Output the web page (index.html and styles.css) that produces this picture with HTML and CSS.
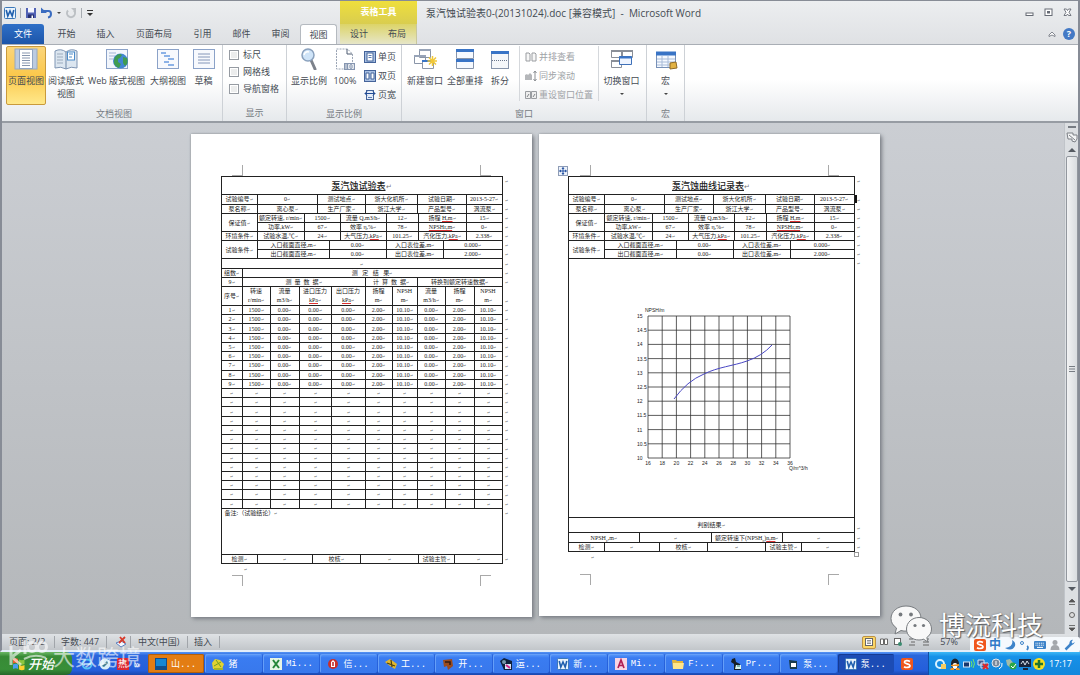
FILE: index.html
```html
<!DOCTYPE html>
<html lang="zh-CN">
<head>
<meta charset="utf-8">
<title>泵汽蚀试验表0-(20131024).doc [兼容模式] - Microsoft Word</title>
<link rel="stylesheet" href="styles.css">
</head>
<body>
<svg class="defs" aria-hidden="true">
  <symbol id="word" viewBox="0 0 12 12"><rect x=".5" y=".5" width="11" height="11" rx="1" fill="#e9f3fc" stroke="#3b78b8"/><path d="M2.2 3l1.6 6L6 4l2.2 5 1.6-6" fill="none" stroke="#1f5fae" stroke-width="1.6"/></symbol>
  <symbol id="sogou" viewBox="0 0 12 12"><rect width="12" height="12" rx="2" fill="#f0561d"/><path d="M9 3.4C7 2.3 3.4 2.4 3.4 4.2S9 5.700 9 7.700 5 10 3 8.800" fill="none" stroke="#fff" stroke-width="1.700"/></symbol>
  <symbol id="pageicon" viewBox="0 0 12 12"><rect x=".5" y=".5" width="11" height="11" fill="#a9c0e2" stroke="#45649a"/><rect x="3" y="2" width="6" height="8" fill="#fff" stroke="#45649a"/><path d="M4.500 4.500h3M4.500 6.500h3" stroke="#5b7db4"/></symbol>
</svg>
<div class="window">
  <header class="head">
    <div class="qat">
      <svg class="i12"><use href="#word"/></svg><span class="bar"></span>
      <button aria-label="保存"><svg class="i12" viewBox="0 0 12 12"><path d="M1 1h10v10H1z" fill="#5263b5"/><path d="M3 1h6v4.500H3z" fill="#f4f6ff"/><path d="M3 7.500h6V11H3z" fill="#252f70"/><path d="M6.500 8.500h1.500V11H6.500z" fill="#fff"/></svg></button>
      <button aria-label="撤消"><svg class="i12" viewBox="0 0 12 12"><path d="M2 4h5.500q2.500 0 2.500 3T7 10.500" fill="none" stroke="#3a6cc0" stroke-width="2"/><path d="M0 4.500V.5l6 5.500H0z" fill="#3a6cc0"/></svg></button>
      <i class="down"></i>
      <button aria-label="恢复"><svg class="i12" viewBox="0 0 12 12"><path d="M3 3.500a4 4 0 1 0 6 0" fill="none" stroke="#bcc0c4" stroke-width="2"/><path d="M6 1h5v5z" fill="#bcc0c4"/></svg></button>
      <span class="bar"></span>
      <button aria-label="自定义"><svg class="i8" viewBox="0 0 8 8"><path d="M1 1.500h6" stroke="#333"/><path d="M1 4h6L4 7z" fill="#333"/></svg></button>
    </div>
    <div class="context-title">表格工具</div>
    <div class="title"><h1>泵汽蚀试验表0-(20131024).doc [兼容模式]&nbsp; -&nbsp; Microsoft Word</h1>
      <div class="winbtns">
        <button aria-label="最小化"><svg viewBox="0 0 9 9"><rect x="1" y="5" width="7" height="2.500" fill="#fff" stroke="#666b75"/></svg></button>
        <button aria-label="还原"><svg viewBox="0 0 9 9"><rect x="1" y="1" width="7" height="6.500" fill="#fff" stroke="#666b75"/><rect x="3.500" y="3.500" width="2" height="1.500" fill="none" stroke="#666b75"/></svg></button>
        <button aria-label="关闭"><svg viewBox="0 0 9 9"><path d="M1 1h2.500l1 1.500 1-1.500H8L6 4.300 8 7.500H5.500l-1-1.500-1 1.500H1L3 4.300z" fill="#fff" stroke="#666b75" stroke-width=".9"/></svg></button>
      </div>
    </div>
    <nav class="tabs">
      <button class="file">文件</button><button>开始</button><button>插入</button><button class="wide">页面布局</button><button>引用</button><button>邮件</button><button>审阅</button><button class="active">视图</button>
    </nav>
    <nav class="context-tabs"><button>设计</button><button>布局</button></nav>
    <div class="help">
      <button aria-label="折叠功能区"><svg class="i8" viewBox="0 0 8 8"><path d="M1 5l3-3 3 3v1.500L4 5 1 6.500z" fill="#fff" stroke="#666b75" stroke-width=".8"/></svg></button>
      <button class="q" aria-label="帮助">?</button>
    </div>
  </header>

  <div class="ribbon">
    <section class="group g-views">
      <div class="tools">
        <button class="big on"><svg viewBox="0 0 24 22"><rect x="1" y="1" width="22" height="20" fill="#bccbe0" stroke="#98a8c0"/><rect x="5.500" y="1.500" width="13" height="19" fill="#fff" stroke="#91a5c2"/><path d="M8 5h8M8 7.500h8M8 10h8M8 12.500h8M8 15h8M8 17.500h8" stroke="#8796ae"/></svg>页面视图</button>
        <button class="big"><svg viewBox="0 0 24 22"><path d="M1 3q6-3 11 1 5-4 11-1v17q-6-2-11 1-5-3-11-1z" fill="#dce6f0" stroke="#7f95b3"/><path d="M12 4v17" stroke="#6f86a5"/><path d="M3 6h6M3 9h6M3 12h6M3 15h6" stroke="#9cabbd"/><rect x="13.500" y="4" width="7" height="8" fill="#fff" stroke="#4d8bc8"/><path d="M15 6h4M15 9h3" stroke="#4d8bc8"/></svg>阅读版式<br>视图</button>
        <button class="big w-web"><svg viewBox="0 0 24 22"><rect x="1.500" y="1.500" width="21" height="19" fill="#f2f6fc" stroke="#8ba2c8"/><path d="M4 5h7M4 8h6M4 11h4" stroke="#a3b5d4"/><circle cx="15.500" cy="13" r="7.500" fill="#4186d2"/><path d="M10 9q4-5 7-2l-2 3-2 1v3l3 2-2 4q-6-2-5-8zM18 9l4 1q2 5-2 8l-2-3z" fill="#409c50"/></svg><span>Web 版式视图</span></button>
        <button class="big w-out"><svg viewBox="0 0 24 22"><rect x="1.500" y="1.500" width="21" height="19" fill="#f7f9fd" stroke="#8ba2c8"/><path d="M5 5h5M8 8h6M12 11h6M8 14h5M12 17h6" stroke="#6a9be0" stroke-width="1.500"/></svg>大纲视图</button>
        <button class="big w-draft"><svg viewBox="0 0 24 22"><rect x="1.500" y="1.500" width="21" height="19" fill="#f7f9fd" stroke="#8ba2c8"/><path d="M6 6h12M6 9h12M6 12h12M6 15h12" stroke="#8496b8"/></svg>草稿</button>
      </div>
      <h2>文档视图</h2>
    </section>
    <section class="group g-show">
      <div class="tools stack">
        <label><input type="checkbox">标尺</label><label><input type="checkbox">网格线</label><label><input type="checkbox">导航窗格</label>
      </div>
      <h2>显示</h2>
    </section>
    <section class="group g-zoom">
      <div class="tools">
        <button class="big"><svg viewBox="0 0 24 22"><path d="M14 12l4 9" stroke="#7d828b" stroke-width="3" stroke-linecap="round"/><circle cx="11" cy="7" r="6" fill="#cfe4f8" stroke="#8aa1bd" stroke-width="1.500"/><path d="M7 7q1-4 5-3" fill="none" stroke="#fff" stroke-width="1.500"/></svg>显示比例</button>
        <button class="big w-100"><svg viewBox="0 0 24 22"><path d="M3.500 1h11l5 5v15h-16z" fill="#fff" stroke="#9aa4b4" stroke-dasharray="2 1"/><path d="M14 1v5h5" fill="none" stroke="#4d5a70"/><path d="M11 15h11v7H11z" fill="#8696b0"/><path d="M13 16v5M15.500 16.500h1.500v4h-1.500zM19 16.500h1.500v4H19z" fill="none" stroke="#fff" stroke-width=".8"/></svg>100%</button>
        <div class="stack list">
          <button><svg class="i12"><use href="#pageicon"/></svg>单页</button>
          <button><svg class="i12" viewBox="0 0 12 12"><rect x=".5" y=".5" width="11" height="11" fill="#a9c0e2" stroke="#45649a"/><path d="M2 3h3v6H2zM7 3h3v6H7z" fill="#fff" stroke="#45649a"/></svg>双页</button>
          <button><svg class="i12" viewBox="0 0 12 12"><rect x="2.500" y="1.500" width="7" height="9" fill="#e4ecf8" stroke="#45649a"/><path d="M1 4.500h10M3 2.500l-2 2 2 2M9 2.500l2 2-2 2" fill="none" stroke="#214b94"/><path d="M4 8.500h4" stroke="#5b7db4"/></svg>页宽</button>
        </div>
      </div>
      <h2>显示比例</h2>
    </section>
    <section class="group g-window">
      <div class="tools">
        <button class="big"><svg viewBox="0 0 24 22"><g fill="#fff" stroke="#8a95a8"><path d="M6.500 1.500h11v8h-11zM1.500 7.500h11v8h-11z"/><path d="M9.500 12.500h11v8h-11z" stroke="#8a95a8"/></g><path d="M6 2h12M1 8h12" stroke="#98a4b8" stroke-width="2"/><path d="M9 13h12" stroke="#3974c6" stroke-width="2"/><path d="M19.500 8v10M14.500 13h10M16 9.500l7 7M23 9.500l-7 7" stroke="#f1c838" stroke-width="1.500"/></svg>新建窗口</button>
        <button class="big"><svg viewBox="0 0 24 22"><path d="M3.500 1.500h17v9h-17zM3.500 11.500h17v9h-17z" fill="#f5f9ff" stroke="#8794aa"/><path d="M3 2.500h18M3 12.500h18" stroke="#3974c6" stroke-width="3"/></svg>全部重排</button>
        <button class="big w-split"><svg viewBox="0 0 24 22"><rect x="3.500" y="3.500" width="17" height="17" fill="#f5f7fa" stroke="#8794aa"/><path d="M3 4.500h18" stroke="#3974c6" stroke-width="3"/><path d="M4 12.500h16" stroke="#69758a" stroke-dasharray="1 1"/></svg>拆分</button>
        <div class="stack list ruled">
          <button disabled><svg class="i12" viewBox="0 0 12 12"><path d="M1 2h3l1 1v7H1zM7 2h3l1 1v7H7z" fill="#f7f7f7" stroke="#9a9da1"/></svg>并排查看</button>
          <button disabled><svg class="i12" viewBox="0 0 12 12"><path d="M0 5l2-1 1 1 2-2 2 2v5H0z" fill="#b5b7ba"/><path d="M10 1v10M8.500 3L10 1l1.500 2M8.500 9l1.500 2 1.500-2" fill="none" stroke="#8d9094"/></svg>同步滚动</button>
          <button disabled><svg class="i12" viewBox="0 0 12 12"><path d="M.5 2.500h5v7h-5zM6.500 2.500h5v7h-5z" fill="#eee" stroke="#9a9da1"/><path d="M2 8l2-3M8 8l2-3" stroke="#808488"/></svg>重设窗口位置</button>
        </div>
        <button class="big w-switch"><svg viewBox="0 0 24 22"><g fill="#fff" stroke="#8a8f98"><path d="M1.500 2.500h10v7h-10zM12.500 2.500h10v7h-10zM1.500 12.500h10v7h-10z"/></g><path d="M1 3h22M1 13h11" stroke="#8a8f98" stroke-width="2"/><path d="M9.500 8.500h12v8h-12z" fill="#eef4ff" stroke="#3f71b9"/><path d="M9 9.500h13" stroke="#3974c6" stroke-width="2"/></svg>切换窗口<i class="down"></i></button>
      </div>
      <h2>窗口</h2>
    </section>
    <section class="group g-macro">
      <div class="tools"><button class="big"><svg viewBox="0 0 24 22"><rect x="2.500" y="4.500" width="19" height="15" fill="#f5f9ff" stroke="#7891b8"/><path d="M2 5.500h20" stroke="#3974c6" stroke-width="4"/><path d="M3 11h18M3 14h18M3 17h18M8 8v11M14 8v11" stroke="#a8bbd8"/><path d="M16 15l6-1 1 6-7 1z" fill="#e2b243" stroke="#906b26"/></svg>宏<i class="down"></i></button></div>
      <h2>宏</h2>
    </section>
  </div>

  <main class="work">
    <div class="canvas">
      <article class="page">
        <i class="crop tl"></i><i class="crop tr"></i><i class="crop bl"></i><i class="crop br"></i>
        <table class="r-title"><tr><th>泵汽蚀试验表</th></tr></table>
        <table class="r-a"><colgroup><col class="c36"><col class="c60"><col class="c48"><col class="c52"><col class="c49"><col></colgroup>
          <tr><td>试验编号</td><td>0</td><td>测试地点</td><td>浙大化机所</td><td>试验日期</td><td>2013-5-27</td></tr>
          <tr><td>泵名称</td><td>离心泵</td><td>生产厂家</td><td>浙江大学</td><td>产品型号</td><td>涡流泵</td></tr></table>
        <table class="r-b"><colgroup><col class="c36"><col class="c47"><col class="c36"><col class="c46"><col class="c32"><col class="c48"><col></colgroup>
          <tr><td rowspan="2">保证值</td><td>额定转速, r/min</td><td>1500</td><td>流量 Q,m3/h</td><td>12</td><td>扬程 <u>H,m</u></td><td>15</td></tr>
          <tr><td>功率,kW</td><td>67</td><td>效率 η,%</td><td>78</td><td><u>NPSHr,m</u></td><td>0</td></tr>
          <tr><td>环境条件</td><td>试验水温,℃</td><td>24</td><td>大气压力,<u>kPa</u></td><td>101.25</td><td>汽化压力,<u>kPa</u></td><td>2.338</td></tr></table>
        <table class="r-c"><colgroup><col class="c36"><col class="c72"><col class="c57"><col class="c57"><col></colgroup>
          <tr><td rowspan="2">试验条件</td><td>入口截面直径,m</td><td>0.00</td><td>入口表位差,m</td><td>0.000</td></tr>
          <tr><td>出口截面直径,m</td><td>0.00</td><td>出口表位差,m</td><td>2.000</td></tr></table>
        <table class="r-gap"><tr><td></td></tr></table>
        <table class="r-head"><colgroup><col class="c21"><col class="c28"><col class="c29"><col class="c32"><col class="c34"><col class="c27"><col class="c25"><col class="c28"><col class="c29"><col></colgroup>
          <tr><td>组数</td><td colspan="9">测 &nbsp; 定 &nbsp; 结 &nbsp; 果</td></tr>
          <tr><td>9</td><td colspan="4">测&nbsp; 量&nbsp; 数&nbsp; 据</td><td colspan="2">计&nbsp; 算&nbsp; 数&nbsp; 据</td><td colspan="3">转换到额定转速数据</td></tr>
          <tr class="units"><td>序号</td><td>转速<br>r/min</td><td>流量<br>m3/h</td><td>进口压力<br><u>kPa</u></td><td>出口压力<br><u>kPa</u></td><td>扬程<br>m</td><td>NPSH<br>m</td><td>流量<br>m3/h</td><td>扬程<br>m</td><td>NPSH<br>m</td></tr></table>
        <table class="r-data"><colgroup><col class="c21"><col class="c28"><col class="c29"><col class="c32"><col class="c34"><col class="c27"><col class="c25"><col class="c28"><col class="c29"><col></colgroup><tbody id="readings"></tbody></table>
        <table class="r-note"><tr><td>备注:（试验结论）</td></tr></table>
        <table class="r-sign"><colgroup><col class="c36"><col class="c55"><col class="c48"><col class="c58"><col class="c36"><col></colgroup><tr><td>检测</td><td></td><td>校核</td><td></td><td>试验主管</td><td></td></tr></table>
        <p class="after">↵</p>
      </article>

      <article class="page second">
        <i class="crop tl"></i><i class="crop tr"></i><i class="crop bl"></i><i class="crop br"></i>
        <svg class="move" viewBox="0 0 10 10"><rect x=".5" y=".5" width="9" height="9" fill="#eef3fb" stroke="#8e9cb6"/><path d="M5 1.500v7M1.500 5h7" stroke="#2a56a4"/><path d="M3.500 3L5 1l1.500 2zM3.500 7L5 9l1.500-2zM3 3.500L1 5l2 1.500zM7 3.500L9 5 7 6.500z" fill="#2a56a4"/></svg>
        <table class="r-title"><tr><th>泵汽蚀曲线记录表</th></tr></table>
        <table class="r-a"><colgroup><col class="c36"><col class="c60"><col class="c49"><col class="c52"><col class="c49"><col></colgroup>
          <tr><td>试验编号</td><td>0</td><td>测试地点</td><td>浙大化机所</td><td>试验日期</td><td>2013-5-27</td></tr>
          <tr><td>泵名称</td><td>离心泵</td><td>生产厂家</td><td>浙江大学</td><td>产品型号</td><td>涡流泵</td></tr></table>
        <table class="r-b"><colgroup><col class="c36"><col class="c48"><col class="c36"><col class="c46"><col class="c32"><col class="c48"><col></colgroup>
          <tr><td rowspan="2">保证值</td><td>额定转速, r/min</td><td>1500</td><td>流量 Q,m3/h</td><td>12</td><td>扬程 <u>H,m</u></td><td>15</td></tr>
          <tr><td>功率,kW</td><td>67</td><td>效率 η,%</td><td>78</td><td><u>NPSHr,m</u></td><td>0</td></tr>
          <tr><td>环境条件</td><td>试验水温,℃</td><td>24</td><td>大气压力,<u>kPa</u></td><td>101.25</td><td>汽化压力,<u>kPa</u></td><td>2.338</td></tr></table>
        <table class="r-c"><colgroup><col class="c36"><col class="c72"><col class="c57"><col class="c57"><col></colgroup>
          <tr><td rowspan="2">试验条件</td><td>入口截面直径,m</td><td>0.00</td><td>入口表位差,m</td><td>0.000</td></tr>
          <tr><td>出口截面直径,m</td><td>0.00</td><td>出口表位差,m</td><td>2.000</td></tr></table>
        <table class="r-chart"><tr><td><svg id="chart" viewBox="0 0 200 180" role="img" aria-label="NPSH 曲线"></svg></td></tr></table>
        <table class="r-verdict"><tr><td>判别结果</td></tr></table>
        <table class="r-npsh"><tr><td>NPSH<sub>c</sub>,m</td><td></td><td>额定转速下(NPSH<sub>c</sub>)<u>n,m</u></td><td></td></tr></table>
        <table class="r-sign"><colgroup><col class="c36"><col class="c55"><col class="c48"><col class="c58"><col class="c36"><col></colgroup><tr><td>检测</td><td></td><td>校核</td><td></td><td>试验主管</td><td></td></tr></table>
        <i class="handle"></i><i class="caret"></i>
        <p class="after">↵</p>
      </article>
    </div>
    <div class="scroll">
      <i class="split"></i>
      <button aria-label="标尺"><svg class="i12" viewBox="0 0 12 12"><path d="M1 2h6v2h4v4l-2 3-3-1V8H2z" fill="#f3f4f5" stroke="#7c8086"/><path d="M3 4l6 5" stroke="#7c8086"/></svg></button>
      <button class="arrow" aria-label="向上"><i class="tri up"></i></button>
      <div class="track"><div class="thumb"><svg class="i8" viewBox="0 0 8 8"><path d="M1 1.500h6M1 4h6M1 6.500h6" stroke="#777c83"/></svg></div></div>
      <button class="arrow" aria-label="向下"><i class="tri"></i></button>
      <button class="arrow" aria-label="上一页"><svg class="i8" viewBox="0 0 8 8"><path d="M1 4l3-3 3 3zM1 6.500h6" fill="#555" stroke="#555" stroke-width=".8"/></svg></button>
      <button class="arrow" aria-label="选择浏览对象"><svg class="i8" viewBox="0 0 8 8"><circle cx="4" cy="4" r="2.500" fill="#ddd" stroke="#666"/></svg></button>
      <button class="arrow" aria-label="下一页"><svg class="i8" viewBox="0 0 8 8"><path d="M1 4l3 3 3-3zM1 1.500h6" fill="#555" stroke="#555" stroke-width=".8"/></svg></button>
    </div>
  </main>

  <footer class="status">
    <span class="s-page">页面: 2/2</span><span class="s-words">字数: 447</span>
    <span class="s-proof"><svg class="i12" viewBox="0 0 12 12"><path d="M1 7l5-2 5 3-5 3z" fill="#f5f8ff" stroke="#5e82c0"/><path d="M5 1l5 6M10 1L4 7" stroke="#d83b2b" stroke-width="1.800"/></svg></span>
    <span class="s-lang">中文(中国)</span><span class="s-ins">插入</span>
    <div class="views">
      <button class="on" aria-label="页面视图"><svg class="i8" viewBox="0 0 8 8"><rect x=".5" y=".5" width="7" height="7" fill="#fff" stroke="#666"/><path d="M2 2.500h4M2 4h4M2 5.500h4" stroke="#666" stroke-width=".7"/></svg></button>
      <button aria-label="阅读版式"><svg class="i8" viewBox="0 0 8 8"><path d="M.5 1h3v5.500h-3zM4.500 1h3v5.500h-3z" fill="#fff" stroke="#666"/></svg></button>
      <button aria-label="Web 版式"><svg class="i8" viewBox="0 0 8 8"><rect x=".5" y=".5" width="6" height="6" fill="#fff" stroke="#666"/><circle cx="6" cy="6" r="2" fill="#3a8b70"/></svg></button>
      <button aria-label="大纲"><svg class="i8" viewBox="0 0 8 8"><path d="M1 1h4M3 4h4M1 7h6" stroke="#666"/></svg></button>
      <button aria-label="草稿"><svg class="i8" viewBox="0 0 8 8"><path d="M1 1h6M1 4h6M1 7h6" stroke="#666"/></svg></button>
      <span>57%</span>
    </div>
  </footer>
</div>

<div class="taskbar">
  <button class="start"><svg viewBox="0 0 14 14"><path d="M1 2q3-1.500 5 0v4.500q-2-1.500-5 0z" fill="#f05b2b"/><path d="M7 2.500q3 1.500 5.500 0V7Q10 8.500 7 7z" fill="#8cc63f"/><path d="M1 7.500q3-1.500 5 0V12q-2-1.500-5 0z" fill="#4a9df0"/><path d="M7 8q3 1.500 5.500 0v4.500q-2.500 1.500-5.500 0z" fill="#ffd02e"/></svg>开始</button>
  <div class="quick">
    <button aria-label="浏览器"><svg class="i12" viewBox="0 0 12 12"><circle cx="6" cy="6" r="4.500" fill="none" stroke="#56c0f5" stroke-width="2"/><path d="M3 6h7" stroke="#bfeaff" stroke-width="1.500"/></svg></button>
    <button aria-label="桌面"><svg class="i12" viewBox="0 0 12 12"><circle cx="6" cy="6" r="5.500" fill="#d9eef8"/><path d="M3 8l5-5 1 2-4 4z" fill="#3b7d92"/></svg></button>
    <button class="red" aria-label="热点">热</button><span>»</span>
  </div>
  <div class="tasks">
    <button class="orange"><svg class="i12" viewBox="0 0 12 12"><rect width="12" height="12" fill="#134f8b"/><path d="M1 1h10v7H1z" fill="#1687d4"/></svg>山...</button>
    <button><svg class="i12" viewBox="0 0 12 12"><path d="M0 5l3-4 5 1 4 4-2 5H1z" fill="#e1d332"/><path d="M2 8l7-4M4 2l5 7" stroke="#719d27"/><path d="M2 11h9" stroke="#a5b52b" stroke-width="2"/></svg>猪</button>
    <button><svg class="i12" viewBox="0 0 12 12"><rect width="12" height="12" fill="#e7f5e5"/><path d="M3 2l6 8M9 2l-6 8" stroke="#26863a" stroke-width="2"/></svg>Mi...</button>
    <button><svg class="i12" viewBox="0 0 12 12"><circle cx="6" cy="6" r="5" fill="#c9302c"/><path d="M4 4l2-2 2 2v5H4z" fill="#fff"/><path d="M6 4v4" stroke="#b22" stroke-width="1.500"/></svg>信...</button>
    <button><svg class="i12" viewBox="0 0 12 12"><path d="M0 4l5-3 7 5-2 5-5-3z" fill="#e2b82f"/><path d="M2 5l8 3M6 2l1 7" stroke="#4e4011" stroke-width="1.200"/></svg>工...</button>
    <button><svg class="i12" viewBox="0 0 12 12"><path d="M1 2l9-1 1 7-5 4-1-4-3 1z" fill="#9b4b1f"/><path d="M3 4h5v3" fill="none" stroke="#331b12" stroke-width="1.500"/></svg>开...</button>
    <button><svg class="i12" viewBox="0 0 12 12"><path d="M0 3l4-3 8 3v9H4z" fill="#10213a"/><path d="M5 6h6v5H5z" fill="#d8e8f5"/><path d="M6 7l4 3" stroke="#d52585" stroke-width="2"/><circle cx="4" cy="4" r="2" fill="#7698a9"/></svg>运...</button>
    <button><svg class="i12"><use href="#word"/></svg>新...</button>
    <button><svg class="i12" viewBox="0 0 12 12"><rect width="12" height="12" fill="#f8d5e4"/><path d="M3 10l3-8 3 8M4 7.500h4" fill="none" stroke="#b01f55" stroke-width="1.700"/></svg>Mi...</button>
    <button><svg class="i12" viewBox="0 0 12 12"><path d="M0 2h4l1 1h6v8H1z" fill="#e4b73e"/><path d="M1 5h11l-1 6H1z" fill="#ffe58b"/></svg>F:...</button>
    <button><svg class="i12" viewBox="0 0 12 12"><path d="M2 1l3-1 1 4 4 2 1 6H4V6L1 4z" fill="#172027"/><path d="M6 7h5v4H5z" fill="#dbf6ef"/><path d="M7 8h3" stroke="#2a7d7b"/></svg>Pr...</button>
    <button><svg class="i12" viewBox="0 0 12 12"><path d="M2 2l8 1v8H3z" fill="#193b4d"/><path d="M4 5h5v4H4z" fill="#fff"/></svg>泵...</button>
    <button class="current"><svg class="i12"><use href="#word"/></svg>泵...</button>
  </div>
  <button class="sg" aria-label="输入法"><svg class="i12"><use href="#sogou"/></svg></button>
  <div class="tray">
    <svg class="i12" viewBox="0 0 12 12"><circle cx="5" cy="6" r="4" fill="none" stroke="#d9f3ff" stroke-width="2"/><rect x="6" y="6" width="5" height="5" fill="#f5cc62"/></svg>
    <svg class="i12" viewBox="0 0 12 12"><ellipse cx="6" cy="6" rx="4" ry="5.500" fill="#20242b"/><ellipse cx="6" cy="8" rx="2.500" ry="3" fill="#fff"/><path d="M2 7l8-1v2H2zM2 10h3v2H1zM7 10h3l1 2H7z" fill="#f29324"/></svg>
    <svg class="i12" viewBox="0 0 12 12"><rect x=".5" y="4" width="6" height="5" fill="#16366d" stroke="#d5e7f8"/><path d="M8 3q2 3 0 6M10 1q3 5 0 9" fill="none" stroke="#76e565"/></svg>
    <svg class="i12" viewBox="0 0 12 12"><path d="M1 2h6v5H1zM4 5h7v5H4z" fill="#445c91" stroke="#dbe4f3"/><path d="M6 6l5 5M11 6l-5 5" stroke="#e22727" stroke-width="2"/></svg>
    <svg class="i12" viewBox="0 0 12 12"><circle cx="5" cy="5" r="4" fill="#7b899b" stroke="#e1e6ec"/><path d="M5 3v4M8 11q4-2 3-6" fill="none" stroke="#fff"/></svg>
    <svg class="i12" viewBox="0 0 12 12"><path d="M1 2l4-1 5 6-3 4-5-4z" fill="#a3bba8"/><circle cx="8" cy="8" r="3.500" fill="#29a745"/><path d="M6 8l2 2 3-4" fill="none" stroke="#fff"/></svg>
    <svg class="i12" viewBox="0 0 12 12"><path d="M0 1h12v8H0zM4 10h5v2H4z" fill="#19253c"/><path d="M2 6l2-3 2 4 2-4 2 3" fill="none" stroke="#d8e1eb"/></svg>
    <svg class="i12" viewBox="0 0 12 12"><circle cx="6" cy="6" r="6" fill="#f5df20"/><path d="M6 2v8M2 6h8" stroke="#22742c" stroke-width="2.500"/></svg>
    <time>17:17</time>
  </div>
</div>

<div class="ime">
  <svg class="i12"><use href="#sogou"/></svg><b>中</b>
  <svg class="i12" viewBox="0 0 12 12"><path d="M8 1q2 7-7 8 7 4 10-2 1-4-3-6z" fill="#3d83c9"/></svg>
  <svg class="i12" viewBox="0 0 12 12"><circle cx="3" cy="4" r="1.500" fill="none" stroke="#3d83c9"/><path d="M8 7q2 1 0 4" fill="none" stroke="#3d83c9" stroke-width="1.800"/></svg>
  <svg class="i12" viewBox="0 0 12 12"><rect y="2" width="12" height="8" rx="1" fill="#3d83c9"/><path d="M1.500 4.200h9M1.500 6.200h9" stroke="#fff" stroke-dasharray="1 .8"/><path d="M3 8.400h6" stroke="#fff"/></svg>
  <svg class="i12" viewBox="0 0 12 12"><circle cx="6" cy="3.500" r="2.500" fill="#a3a7ac"/><path d="M1.500 11q0-5 4.500-5t4.500 5z" fill="#a3a7ac"/></svg>
  <svg class="i12" viewBox="0 0 12 12"><path d="M1.500 10.500L7 5" stroke="#3d83c9" stroke-width="2.500"/><path d="M11 3L8.500 4.500 7.500 3 9 .8Q5 1 5.500 5q3 3 5.500-2z" fill="#3d83c9"/></svg>
</div>
<div class="mark mark-right">
  <svg viewBox="0 0 42 38"><path d="M16 1C7.500 1 1 6.500 1 13.500c0 4 2 7 5.500 9.500L5 29l6-3.500c2 .6 4 .8 6 .5 7-1 14-5 14-12.500S24.500 1 16 1z" fill="#f8f8f8" stroke="#777b7f"/><circle cx="10.500" cy="9.500" r="1.900" fill="#75797d"/><circle cx="21" cy="9.500" r="1.900" fill="#75797d"/><path d="M29 12.500c-7 0-12.500 5-12.500 11.500S22 35 29 35c1.500 0 3-.3 4.500-.8L38 37l-1.200-4.500c3-2 4.700-5 4.700-8.500 0-6.500-5.500-11.500-12.500-11.500z" fill="#f8f8f8" stroke="#777b7f"/><circle cx="25" cy="20.500" r="1.600" fill="#75797d"/><circle cx="33.500" cy="20.500" r="1.600" fill="#75797d"/></svg>
  <span>博流科技</span>
</div>
<div class="mark mark-left">
  <svg viewBox="0 0 42 30" fill="none" stroke="#fff" stroke-width="3"><path d="M3 5v20M13 10L4 17l9 8M14 4l3-2v12"/><circle cx="24" cy="7" r="4.500"/><circle cx="34" cy="7" r="4.500"/><path d="M16 19q11-6 22-1" stroke-width="2"/></svg>
  <span>大数跨境</span>
</div>
<script src="report.js"></script>
</body>
</html>
```
FILE: styles.css
```css
* { box-sizing: border-box; }
body {
  margin: 0; height: 100vh; display: flex; flex-direction: column; overflow: hidden; position: relative;
  font: 9px/12px "Open Sans", "Noto Sans CJK SC", sans-serif; color: #444a52;
}
button { font: inherit; color: inherit; background: none; border: 0; padding: 0; margin: 0; display: flex; align-items: center; justify-content: center; white-space: nowrap; }
h1, h2, p { margin: 0; font: inherit; }
.defs { display: none; }
.i12 { width: 12px; height: 12px; flex: none; }
.i8 { width: 8px; height: 8px; flex: none; }
.down { border: 2px solid transparent; border-top-color: #444; border-bottom: 0; width: 4px; }
.window { flex: 1; min-height: 0; display: flex; flex-direction: column; border: 2px solid #878c96; border-top-width: 1px; border-bottom: 2px solid #e3edf8; background: #e3e5e7; }

.head { display: grid; grid-template: 23px 20px / 338px 77px 1fr; background: linear-gradient(#eceef0, #dfe1e4); border-bottom: 1px solid #a9aeb5; }
.qat { display: flex; align-items: center; gap: 4px; padding-left: 2px; }
.bar { width: 1px; height: 10px; background: #a6abb1; }
.context-title { background: linear-gradient(#efdf3c, #d9cd4f); color: #fff; font-weight: 700; text-align: center; line-height: 22px; }
.context-tabs { background: linear-gradient(#dcd468, #e6e6c8); display: flex; justify-content: space-around; border-right: 1px solid #c9c89c; }
.title { display: flex; justify-content: space-between; align-items: center; padding: 0 6px 0 9px; }
.title h1 { font-size: 10px; white-space: nowrap; }
.winbtns { display: flex; gap: 10px; }
.winbtns svg { width: 9px; height: 9px; }
.tabs { display: flex; }
.tabs button { width: 39px; }
.tabs .wide { width: 58px; }
.tabs .file { width: 42px; margin-right: 3px; background: linear-gradient(#2f70c7, #1c55a9); color: #fff; border-radius: 3px 3px 0 0; }
.tabs .active { width: 37px; background: #fff; border: 1px solid #b5bac0; border-bottom: 0; border-radius: 3px 3px 0 0; }
.help { display: flex; justify-content: flex-end; align-items: center; gap: 7px; padding-right: 3px; }
.q { width: 12px; height: 12px; border-radius: 6px; background: #4379c5; color: #fff; font-weight: 700; }

.ribbon { display: flex; height: 78px; background: linear-gradient(#fff 45%, #e6e9ec); border-bottom: 2px solid #979ca3; }
.group { display: flex; flex-direction: column; border-right: 1px solid #cdd1d6; }
.group h2 { text-align: center; color: #777c84; line-height: 17px; }
.tools { display: flex; flex: 1; align-items: flex-start; padding-top: 1px; }
.g-views { width: 221px; padding-left: 4px; }
.g-show { width: 64px; }
.g-zoom { width: 115px; }
.g-window { width: 245px; }
.g-macro { width: 38px; }
.big { width: 40px; height: 59px; flex-direction: column; justify-content: flex-start; padding-top: 2px; line-height: 13px; }
.big svg { width: 24px; height: 22px; flex: none; margin-bottom: 4px; }
.big .down { margin-top: 6px; }
.g-views .big { border: 1px solid transparent; padding-top: 1px; }
.g-views .on { background: linear-gradient(#fbd57a, #fbc84c 50%, #ffe88a); border-color: #c99a3c; border-radius: 2px; }
.g-views .w-web { width: 61px; }
.g-views .w-out { width: 42px; }
.g-views .w-draft { width: 29px; }
.g-zoom .tools { padding-left: 2px; }
.g-zoom .w-100 { width: 32px; }
.g-window .tools { padding-left: 3px; }
.w-split { width: 30px; }
.g-window .w-switch { width: 45px; }
.stack { flex-direction: column; }
.g-show .stack { gap: 5px; padding: 4px 0 0 6px; }
.stack label { display: flex; align-items: center; gap: 4px; }
.stack input { appearance: none; width: 10px; height: 10px; margin: 0; border: 1px solid #969ba2; background: #eceded; box-shadow: inset 0 0 0 1px #fff; }
.list { display: flex; gap: 7px; padding: 5px 0 0 3px; }
.list button { gap: 2px; justify-content: flex-start; }
.list button:disabled { color: #a0a3a7; }
.ruled { width: 80px; padding-left: 5px; margin-left: 4px; border-left: 1px solid #d5d8dc; border-right: 1px solid #d5d8dc; }

.work { flex: 1; min-height: 0; display: flex; background: linear-gradient(#cbced3, #b4b7ba); }
.canvas { flex: 1; display: flex; justify-content: center; align-items: flex-start; gap: 7px; padding: 11px 0 0 4px; overflow: hidden; }
.page { position: relative; width: 341px; padding: 42px 29px 42px 30px; background: #fff; box-shadow: 2px 2px 4px #7c8087, 0 0 2px #8c9097; color: #222; font: 6px/8px "Liberation Serif", "Noto Sans CJK SC", serif; }
.second { padding: 42px 25px 53px 29px; }
.page table { width: 100%; table-layout: fixed; border-collapse: collapse; margin-bottom: -1px; }
.page td, .page th { border: 1px solid #222; padding: 0; text-align: center; white-space: nowrap; position: relative; }
.page td::after, .page th::after { content: "↵"; color: #777; font-size: 4px; line-height: 1px; }
.page td:last-child::before { content: "↵"; position: absolute; right: -6px; bottom: 0; color: #777; font-size: 4px; line-height: 6px; }
.page .r-note td::before, .page .r-chart td::before { top: 2px; bottom: auto; }
.page th::before { content: "↵"; position: absolute; right: -6px; top: 2px; color: #777; font-size: 4px; line-height: 6px; }
.page th { font-size: 9px; font-weight: 500; text-decoration: underline; }
.page th::after { font-size: 7px; display: inline-block; }
.page u { text-decoration: underline #d33; }
.page sub { font-size: 4px; line-height: 1px; }
.r-title { height: 19px; }
.r-a { height: 20px; }
.r-b { height: 28px; }
.r-c { height: 19px; }
.r-gap { height: 11px; }
.r-head { height: 38px; }
.r-head .units { height: 19px; line-height: 9px; }
.r-data { height: 204px; }
.r-note { height: 47px; }
.r-sign { height: 10px; }
.page .r-note td { text-align: left; vertical-align: top; padding-left: 3px; }
.r-chart { height: 260px; }
.page .r-chart td::after { content: none; }
.r-chart svg { display: block; width: 200px; height: 180px; margin: 0 auto; }
.r-verdict { height: 16px; }
.r-npsh { height: 11px; }
.c21 { width: 21px; } .c25 { width: 25px; } .c27 { width: 27px; } .c28 { width: 28px; } .c29 { width: 29px; }
.c32 { width: 32px; } .c34 { width: 34px; } .c36 { width: 36px; } .c46 { width: 46px; } .c47 { width: 47px; }
.c48 { width: 48px; } .c49 { width: 49px; } .c52 { width: 52px; } .c55 { width: 55px; } .c57 { width: 57px; }
.c58 { width: 58px; } .c60 { width: 60px; } .c72 { width: 72px; }
.after { padding: 3px 0 0 23px; height: 12px; font-size: 4px; color: #777; }
.crop { position: absolute; width: 11px; height: 11px; border: 0 solid #a9a9a9; }
.tl { left: 41px; top: 31px; border-width: 0 1px 1px 0; }
.tr { right: 41px; top: 31px; border-width: 0 0 1px 1px; }
.bl { left: 41px; bottom: 31px; border-width: 1px 1px 0 0; }
.br { right: 41px; bottom: 31px; border-width: 1px 0 0 1px; }
.move { position: absolute; left: 19px; top: 32px; width: 10px; height: 10px; }
.handle { position: absolute; right: 21px; bottom: 59px; width: 5px; height: 5px; border: 1px solid #999; }
.caret { position: absolute; right: 23px; top: 61px; width: 2px; height: 8px; background: #111; }
.grid { stroke: #333; stroke-width: .8; fill: none; }
.curve { stroke: #4a48c4; stroke-width: 1; fill: none; }
.r-chart text { font: 5px "Liberation Sans", sans-serif; fill: #222; }

.scroll { width: 14px; display: flex; flex-direction: column; align-items: center; background: #dcdfe2; border-left: 1px solid #c0c4c9; }
.split { width: 8px; height: 2px; margin: 3px 0; background: #777c83; }
.arrow { width: 12px; height: 13px; }
.tri { border: 4px solid transparent; border-top-color: #555a61; border-bottom: 0; }
.tri.up { border-top: 0; border-bottom: 4px solid #555a61; }
.track { flex: 1; width: 12px; display: flex; }
.thumb { flex: 1; display: flex; align-items: center; justify-content: center; border: 1px solid #92979e; border-radius: 2px; background: linear-gradient(90deg, #f1f2f3, #d9dcdf); }

.status { display: flex; align-items: center; height: 16px; background: linear-gradient(#dfe2e5, #c2c6ca); padding-left: 7px; white-space: nowrap; }
.status > span { border-right: 1px solid #a1a5aa; }
.s-page { width: 46px; }
.s-words { width: 52px; padding-left: 6px; }
.s-proof { width: 24px; padding-left: 8px; height: 12px; }
.s-lang { width: 57px; padding-left: 7px; }
.s-ins { width: 32px; padding-left: 6px; }
.views { display: flex; align-items: center; gap: 2px; margin-left: auto; padding-right: 120px; }
.views button { width: 12px; height: 13px; }
.views .on { background: #fbd667; border: 1px solid #bd9344; border-radius: 2px; width: 14px; }
.views span { padding-left: 6px; }

.taskbar { height: 23px; flex: none; display: flex; background: linear-gradient(#5594f5, #2a66dc 15%, #245edb 80%, #1a47ad); color: #fff; font-size: 10px; }
.start { width: 72px; gap: 2px; padding-right: 6px; border-radius: 0 6px 6px 0; background: linear-gradient(#6bb865, #378a36 20%, #388f38 75%, #25672b); font: italic 500 13px "Noto Sans CJK SC", sans-serif; }
.start svg { width: 14px; height: 14px; }
.quick { width: 76px; display: flex; align-items: center; justify-content: center; gap: 6px; }
.red { width: 12px; height: 12px; background: #dc2930; font-size: 9px; }
.tasks { flex: 1; display: flex; gap: 1px; padding: 2px 0; }
.tasks button { flex: 1; min-width: 0; justify-content: flex-start; gap: 4px; padding-left: 7px; border-radius: 2px; background: linear-gradient(#5b9bfb, #3a7cf1 20%, #3878ec); font: 9px "Liberation Mono", "Noto Sans CJK SC", monospace; box-shadow: inset 1px 1px 0 #659ff8; }
.tasks .orange { background: #e37d13; box-shadow: inset 0 0 0 1px #b25f0b; }
.tasks .current { background: #1c4cb5; box-shadow: inset 1px 1px 0 #163b93; }
.sg { width: 34px; padding-right: 8px; }
.tray { width: 152px; display: flex; align-items: center; gap: 2px; padding-left: 6px; background: linear-gradient(#3db7f5, #1691e8 20%, #1487dc); border-left: 1px solid #0f4fa5; }
.tray time { margin-left: 2px; font-size: 9px; }

.ime { position: absolute; right: 0; bottom: 23px; width: 110px; height: 15px; padding: 0 4px; display: flex; align-items: center; justify-content: space-between; background: #f5f9fd; border-radius: 2px; }
.ime b { color: #2f7bc8; font-size: 12px; }
.mark { position: absolute; display: flex; align-items: center; white-space: nowrap; color: #fff; }
.mark-right { right: 37px; bottom: 32px; gap: 7px; font: 26px/38px "Noto Sans CJK SC", sans-serif; text-shadow: 1px 1px 1px #5a5e62, 0 0 2px #777; }
.mark-right svg { width: 42px; height: 38px; }
.mark-left { left: 8px; bottom: 5px; gap: 3px; font: 22px/30px "Noto Sans CJK SC", sans-serif; opacity: .6; }
.mark-left svg { width: 42px; height: 30px; }
```
FILE: report.js
```js
const body = document.getElementById("readings");
const values = ["1500", "0.00", "0.00", "0.00", "2.00", "10.10", "0.00", "2.00", "10.10"];
for (let r = 1; r <= 22; r++) {
  const row = body.insertRow();
  row.insertCell().textContent = r <= 9 ? r : "";
  values.forEach(v => { row.insertCell().textContent = r <= 9 ? v : ""; });
}

const x0 = 37, y0 = 18, size = 142, step = size / 10;
let lines = "", labels = "";
for (let i = 0; i <= 10; i++) {
  const p = i * step;
  lines += `M${x0 + p} ${y0}v${size}M${x0} ${y0 + p}h${size}`;
  labels += `<text x="${x0 + p}" y="${y0 + size + 7}" text-anchor="middle">${16 + 2 * i}</text>`;
  labels += `<text x="${x0 - 11}" y="${y0 + p + 2}">${15 - i / 2}</text>`;
}
document.getElementById("chart").innerHTML =
  `<path class="grid" d="${lines}"/>` +
  `<path class="curve" d="M63 101Q76 83 93 76C107 69 122 68 136 63Q151 58 161 47"/>` + labels +
  `<text x="34" y="14">NPSH/m</text><text x="178" y="172">Q/m^3/h</text>`;
```
